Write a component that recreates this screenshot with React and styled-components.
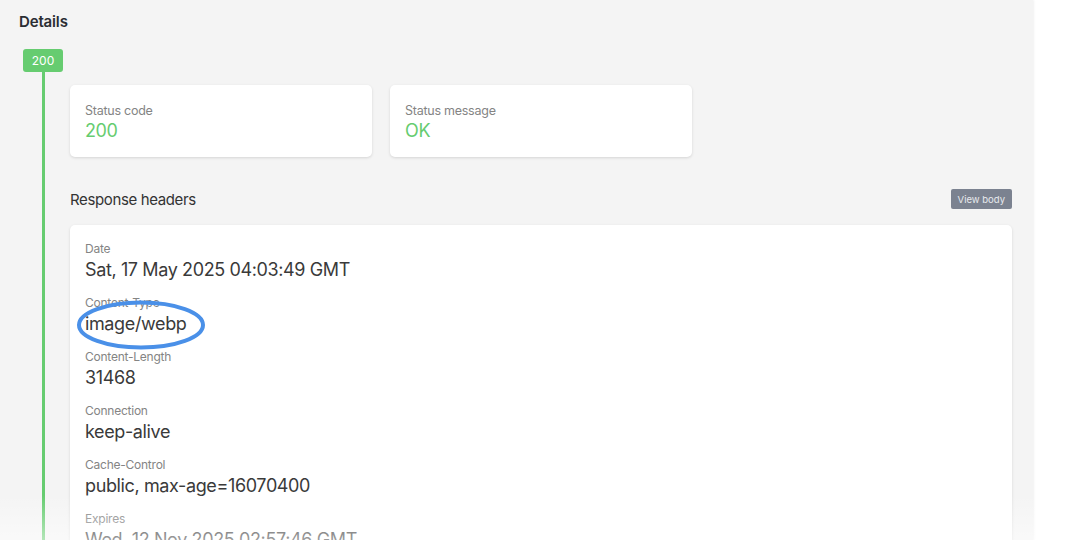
import styled, { createGlobalStyle } from "styled-components";

const GlobalStyle = createGlobalStyle`
  html, body {
    margin: 0;
    padding: 0;
    background: #ffffff;
    font-family: "Inter", "Liberation Sans", sans-serif;
    -webkit-font-smoothing: antialiased;
  }
`;

const Page = styled.div`
  display: flex;
  width: 1080px;
  height: 540px;
  overflow: hidden;
  position: relative;
`;

const Main = styled.main`
  width: 1033px;
  flex-shrink: 0;
  background: #f4f4f4;
  box-shadow: 1px 0 2px rgba(0, 0, 0, 0.06);
  padding: 13px 21px 0 19px;
  box-sizing: border-box;
`;

const Heading = styled.h2`
  margin: 0;
  font-size: 15px;
  line-height: 18px;
  font-weight: 600;
  letter-spacing: -0.01em;
  color: #2b2d33;
`;

const Timeline = styled.div`
  display: flex;
  margin-top: 18px;
`;

const Rail = styled.div`
  width: 40px;
  margin: 0 7px 0 4px;
  display: flex;
  flex-direction: column;
  align-items: center;
`;

const Badge = styled.div`
  width: 40px;
  height: 23px;
  border-radius: 3px;
  background: #66cc70;
  color: #ffffff;
  font-size: 12px;
  line-height: 23px;
  text-align: center;
`;

const Line = styled.div`
  width: 3px;
  height: 600px;
  background: #66cc70;
`;

const Content = styled.div`
  flex: 1;
  padding-top: 36px;
`;

const StatusRow = styled.div`
  display: flex;
  gap: 18px;
`;

const Card = styled.div`
  background: #ffffff;
  border-radius: 5px;
  box-shadow: 0 1px 3px rgba(0, 0, 0, 0.13);
  box-sizing: border-box;
`;

const StatCard = styled(Card)`
  width: 302px;
  height: 72px;
  padding: 18px 15px 0;
`;

const StatLabel = styled.div`
  font-size: 12.5px;
  line-height: 16px;
  letter-spacing: -0.02em;
  color: #848484;
`;

const StatValue = styled.div`
  font-size: 18px;
  line-height: 22px;
  letter-spacing: -0.02em;
  color: #66cc70;
  margin-top: 1px;
`;

const SectionBar = styled.div`
  display: flex;
  align-items: center;
  justify-content: space-between;
  margin-top: 32px;
  height: 20px;
`;

const SectionTitle = styled.div`
  font-size: 15px;
  letter-spacing: -0.025em;
  color: #333333;
`;

const ViewButton = styled.button`
  height: 20px;
  padding: 0 7px;
  border: none;
  border-radius: 2px;
  background: #7b8290;
  color: #e8eaee;
  font-family: inherit;
  font-size: 9.5px;
`;

const HeadersCard = styled(Card)`
  margin-top: 16px;
  padding: 16px 15px;
  height: 400px;
`;

const Item = styled.div`
  position: relative;
  margin-bottom: 14px;
`;

const ItemLabel = styled.div`
  font-size: 12px;
  line-height: 15px;
  letter-spacing: -0.02em;
  color: #848484;
`;

const ItemValue = styled.div`
  font-size: 18px;
  line-height: 22px;
  letter-spacing: -0.021em;
  color: #3a3a3a;
  margin-top: 3px;
`;

const Circle = styled.svg`
  position: absolute;
  left: -9px;
  top: 5px;
  width: 130px;
  height: 50px;
  overflow: visible;
`;

const Fade = styled.div`
  position: absolute;
  left: 0;
  right: 0;
  bottom: 0;
  height: 45px;
  background: linear-gradient(to bottom, rgba(255, 255, 255, 0), rgba(255, 255, 255, 0.5));
  pointer-events: none;
`;

const headers = [
  ["Date", "Sat, 17 May 2025 04:03:49 GMT"],
  ["Content-Type", "image/webp", true],
  ["Content-Length", "31468"],
  ["Connection", "keep-alive"],
  ["Cache-Control", "public, max-age=16070400"],
  ["Expires", "Wed, 12 Nov 2025 02:57:46 GMT"],
];

const App = () => {
  return (
    <Page>
      <GlobalStyle />
      <Main>
        <Heading>Details</Heading>
        <Timeline>
          <Rail>
            <Badge>200</Badge>
            <Line />
          </Rail>
          <Content>
            <StatusRow>
              <StatCard>
                <StatLabel>Status code</StatLabel>
                <StatValue>200</StatValue>
              </StatCard>
              <StatCard>
                <StatLabel>Status message</StatLabel>
                <StatValue>OK</StatValue>
              </StatCard>
            </StatusRow>
            <SectionBar>
              <SectionTitle>Response headers</SectionTitle>
              <ViewButton>View body</ViewButton>
            </SectionBar>
            <HeadersCard>
              {headers.map(([name, value, marked]) => (
                <Item key={name}>
                  <ItemLabel>{name}</ItemLabel>
                  <ItemValue>{value}</ItemValue>
                  {marked && (
                    <Circle viewBox="0 0 130 50">
                      <ellipse cx="65" cy="25" rx="62" ry="22.5" fill="none" stroke="#4a90e8" strokeWidth="4" />
                    </Circle>
                  )}
                </Item>
              ))}
            </HeadersCard>
          </Content>
        </Timeline>
      </Main>
      <Fade />
    </Page>
  );
};

export default App;
